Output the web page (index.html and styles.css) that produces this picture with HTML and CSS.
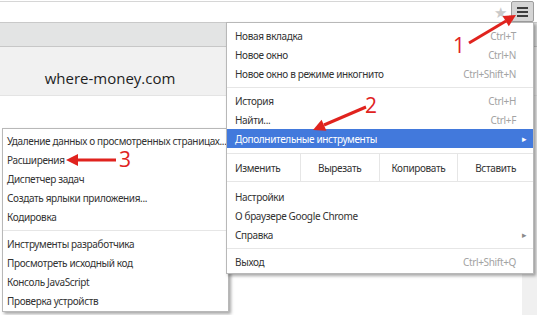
FILE: index.html
```html
<!DOCTYPE html>
<html lang="ru">
<head>
    <meta charset="UTF-8">
    <title>Chrome menu</title>
    <link rel="stylesheet" href="styles.css">
</head>
<body>
    <div class="window">
        <div class="toolbar">
            <div class="omnibox">
                <span class="star">&#9733;</span>
            </div>
            <div class="menu-btn">
                <span></span><span></span><span></span>
            </div>
        </div>
        <div class="bookmarks"></div>
        <div class="page-band">
            <div class="site-name">where-money.com</div>
        </div>
        <div class="page-body"></div>
        <div class="scrollbar"></div>

        <div class="menu submenu">
            <div class="item">Удаление данных о просмотренных страницах...</div>
            <div class="item">Расширения</div>
            <div class="item">Диспетчер задач</div>
            <div class="item">Создать ярлыки приложения...</div>
            <div class="item">Кодировка</div>
            <div class="sep"></div>
            <div class="item">Инструменты разработчика</div>
            <div class="item">Просмотреть исходный код</div>
            <div class="item">Консоль JavaScript</div>
            <div class="item">Проверка устройств</div>
        </div>

        <div class="menu main-menu">
            <div class="item"><span>Новая вкладка</span><span class="key">Ctrl+T</span></div>
            <div class="item"><span>Новое окно</span><span class="key">Ctrl+N</span></div>
            <div class="item"><span>Новое окно в режиме инкогнито</span><span class="key">Ctrl+Shift+N</span></div>
            <div class="sep"></div>
            <div class="item"><span>История</span><span class="key">Ctrl+H</span></div>
            <div class="item"><span>Найти...</span><span class="key">Ctrl+F</span></div>
            <div class="item active"><span>Дополнительные инструменты</span><span class="arrow">&#9656;</span></div>
            <div class="edit-row">
                <div class="edit-label">Изменить</div>
                <div class="edit-cell">Вырезать</div>
                <div class="edit-cell">Копировать</div>
                <div class="edit-cell last">Вставить</div>
            </div>
            <div class="item"><span>Настройки</span></div>
            <div class="item"><span>О браузере Google Chrome</span></div>
            <div class="item"><span>Справка</span><span class="arrow">&#9656;</span></div>
            <div class="sep"></div>
            <div class="item"><span>Выход</span><span class="key">Ctrl+Shift+Q</span></div>
        </div>

        <svg class="marks" width="537" height="315" viewBox="0 0 537 315">
            <line x1="469" y1="43" x2="506" y2="21" />
            <polygon points="516,15 508.8,26.3 502.6,15.9" />
            <text x="453" y="53">1</text>

            <line x1="366" y1="107" x2="324" y2="125" />
            <polygon points="313,130 326.4,130.7 321.6,119.7" />
            <text x="365" y="113">2</text>

            <line x1="116" y1="160" x2="78" y2="160" />
            <polygon points="66,160 78,154 78,166" />
            <text x="119" y="167">3</text>
        </svg>
    </div>
</body>
</html>
```

FILE: styles.css
```css
body {
    margin: 0;
    background: #ffffff;
    font-family: 'Noto Sans', 'Open Sans', sans-serif;
}

.window {
    position: relative;
    width: 537px;
    height: 315px;
    overflow: hidden;
    background: #ffffff;
}

.toolbar {
    display: flex;
    height: 21px;
    padding-top: 1px;
    border-bottom: 1px solid #c9c9c9;
    background: #ffffff;
}

.omnibox {
    flex: 1;
    display: flex;
    justify-content: flex-end;
    align-items: center;
    border-top: 1px solid #d6d6d6;
    padding-right: 4px;
}

.star {
    color: #c9c9c9;
    font-size: 15px;
    line-height: 1;
}

.menu-btn {
    width: 21px;
    height: 19px;
    margin-right: 3px;
    border: 1px solid #9d9d9d;
    border-radius: 2px;
    background: #d5d5d5;
    display: flex;
    flex-direction: column;
    justify-content: center;
    align-items: center;
    gap: 2px;
}

.menu-btn span {
    display: block;
    width: 11px;
    height: 2px;
    background: #3d3d3d;
}

.bookmarks {
    height: 23px;
    background: #e3e4e4;
    border-bottom: 1px solid #c7c7c7;
}

.page-band {
    height: 48px;
    background: #f1f1f1;
    border-bottom: 1px solid #e4e4e4;
    display: flex;
    align-items: center;
}

.site-name {
    width: 220px;
    text-align: center;
    font-family: 'Open Sans', sans-serif;
    font-size: 15px;
    color: #1e1e1e;
    padding-top: 14px;
}

.scrollbar {
    position: absolute;
    right: 0;
    top: 96px;
    bottom: 0;
    width: 15px;
    background: #f0f0f0;
}

/* menus */

.menu {
    position: absolute;
    background: #ffffff;
    border: 1px solid #b8b8b8;
    box-shadow: 2px 2px 3px rgba(0, 0, 0, 0.35);
    font-size: 10px;
    letter-spacing: -0.35px;
    color: #333333;
}

.main-menu {
    left: 226px;
    top: 22px;
    width: 306px;
    padding: 3px 0 2px;
    z-index: 2;
}

.submenu {
    left: 2px;
    top: 128px;
    width: 225px;
    padding: 2px 0 1px;
    z-index: 1;
}

.item {
    display: flex;
    justify-content: space-between;
    align-items: center;
    height: 19px;
    padding: 0 17px 0 8px;
    white-space: nowrap;
}

.submenu .item {
    padding: 0 4px;
}

.item.active {
    background: #4279dc;
    color: #ffffff;
    padding-right: 6px;
}

.key {
    color: #a3a3a3;
}

.arrow {
    font-size: 9px;
    color: #8a8a8a;
    margin-right: -11px;
}

.item.active .arrow {
    color: #ffffff;
    margin-right: 0;
}

.sep {
    height: 1px;
    margin: 4px 0 3px;
    background: #e6e6e6;
}

.edit-row {
    display: flex;
    height: 27px;
    margin: 5px 0 5px;
    border-top: 1px solid #e6e6e6;
    border-bottom: 1px solid #e6e6e6;
}

.edit-label {
    width: 65px;
    padding-left: 8px;
    display: flex;
    align-items: center;
    border-right: 1px solid #e6e6e6;
}

.edit-cell {
    width: 78px;
    display: flex;
    justify-content: center;
    align-items: center;
    border-right: 1px solid #e6e6e6;
}

.edit-cell.last {
    width: 75px;
    border-right: none;
}

.marks {
    position: absolute;
    left: 0;
    top: 0;
    z-index: 3;
    pointer-events: none;
}

.marks line {
    stroke: #e0231e;
    stroke-width: 3;
}

.marks polygon {
    fill: #e0231e;
}

.marks text {
    fill: #e0231e;
    font-family: 'Open Sans', sans-serif;
    font-size: 21px;
}
```
